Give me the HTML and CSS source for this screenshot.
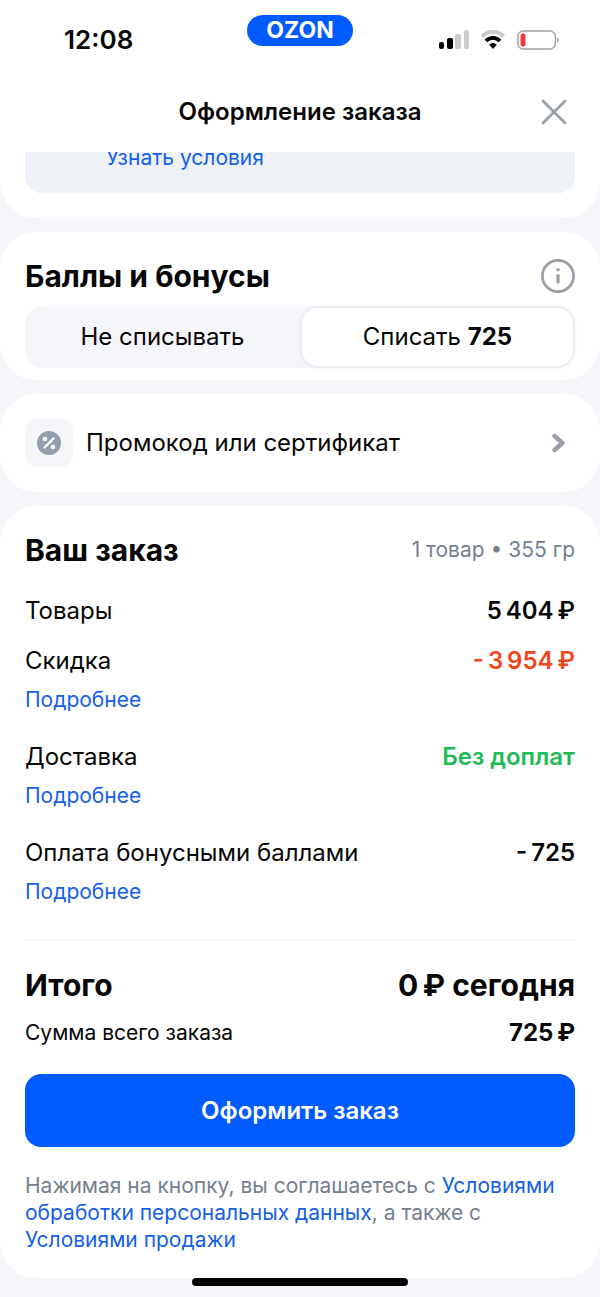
FILE: index.html
```html
<!DOCTYPE html>
<html lang="ru">
<head>
<meta charset="utf-8">
<meta name="viewport" content="width=device-width, initial-scale=1">
<title>Оформление заказа</title>
<link rel="stylesheet" href="styles.css">
</head>
<body>
<header class="top">
  <div class="status">
    <span class="time">12:08</span>
    <span class="brand">OZON</span>
    <div class="indicators">
      <svg width="30" height="20" viewBox="0 0 30 20" aria-hidden="true">
        <rect x="0" y="12" width="5" height="7" rx="2" fill="#000"/>
        <rect x="8" y="8" width="6" height="11" rx="2" fill="#000"/>
        <rect x="16" y="4" width="6" height="15" rx="2" fill="#cbcbcb"/>
        <rect x="25" y="0" width="5" height="19" rx="2" fill="#cbcbcb"/>
      </svg>
      <svg width="26" height="20" viewBox="0 0 26 20" fill="none" aria-hidden="true">
        <path d="M2 6.500C8.500 .3 17.500 .3 24 6.500" stroke="#cbcbcb" stroke-width="4"/>
        <path d="M6 11c4-4.200 10-4.200 14 0" stroke="#000" stroke-width="3.800"/>
        <path d="M9.200 14.700c2.300-2.200 5.300-2.200 7.600 0L13 19z" fill="#000"/>
      </svg>
      <svg width="43" height="20" viewBox="0 0 43 20" aria-hidden="true">
        <rect x=".9" y=".9" width="37.500" height="18.200" rx="5.500" fill="none" stroke="#a3a3a3" stroke-width="1.500"/>
        <rect x="3.500" y="3.500" width="5" height="13" rx="2" fill="#f03a34"/>
        <path d="M40 7.500c2.300.6 2.300 4.400 0 5z" fill="#a3a3a3"/>
      </svg>
    </div>
  </div>
  <div class="titlebar">
    <h1 class="title">Оформление заказа</h1>
    <button class="icon-button" type="button" aria-label="Закрыть">
      <svg width="26" height="26" viewBox="0 0 26 26" aria-hidden="true">
        <path d="M2 2l22 22M24 2L2 24" stroke="#989fa9" stroke-width="2.600" stroke-linecap="round"/>
      </svg>
    </button>
  </div>
</header>
<main class="content">
  <section class="card card-notice">
    <div class="notice"><a class="link notice-link" href="#terms">Узнать условия</a></div>
  </section>

  <section class="card card-points">
    <div class="card-head">
      <h2 class="heading">Баллы и бонусы</h2>
      <button class="icon-button" type="button" aria-label="О баллах">
        <svg width="34" height="34" viewBox="0 0 34 34" aria-hidden="true">
          <circle cx="17" cy="17" r="15.600" fill="none" stroke="#989fa9" stroke-width="2.700"/>
          <circle cx="17" cy="10.700" r="1.700" fill="#989fa9"/>
          <path d="M17 16.500v6.500" stroke="#989fa9" stroke-width="3.200" stroke-linecap="round"/>
        </svg>
      </button>
    </div>
    <div class="segments" role="radiogroup" aria-label="Баллы и бонусы">
      <label class="segment"><input class="segment-input" type="radio" name="points"><span class="segment-text">Не списывать</span></label>
      <label class="segment"><input class="segment-input" type="radio" name="points" checked><span class="segment-text">Списать <b>725</b></span></label>
    </div>
  </section>

  <section class="card">
    <button class="promo" type="button">
      <span class="promo-tile">
        <svg width="24" height="24" viewBox="0 0 24 24" aria-hidden="true">
          <circle cx="12" cy="12" r="12" fill="#949eac"/>
          <path d="M7.500 16.500l9-9" stroke="#fff" stroke-width="2.400" stroke-linecap="round"/>
          <circle cx="8" cy="8" r="2.300" fill="#fff"/>
          <circle cx="16" cy="16" r="2.300" fill="#fff"/>
        </svg>
      </span>
      <span class="promo-text">Промокод или сертификат</span>
      <svg class="promo-arrow" width="14" height="20" viewBox="0 0 14 20" aria-hidden="true">
        <path d="M2.500 3l8 7-8 7" fill="none" stroke="#989fa9" stroke-width="4.400" stroke-linecap="round" stroke-linejoin="round"/>
      </svg>
    </button>
  </section>

  <section class="card card-order">
    <div class="card-head">
      <h2 class="heading">Ваш заказ</h2>
      <span class="meta">1 товар • 355 гр</span>
    </div>
    <div class="entries">
      <div class="rows">
        <div class="row"><span>Товары</span><span class="value">5&#8201;404&#8201;₽</span></div>
        <div class="entry">
          <div class="row"><span>Скидка</span><span class="value value-discount">-&#8201;3&#8201;954&#8201;₽</span></div>
          <a class="link" href="#discount">Подробнее</a>
        </div>
      </div>
      <div class="entry">
        <div class="row"><span>Доставка</span><span class="value value-free">Без доплат</span></div>
        <a class="link" href="#delivery">Подробнее</a>
      </div>
      <div class="entry">
        <div class="row"><span>Оплата бонусными баллами</span><span class="value">-&#8201;725</span></div>
        <a class="link" href="#points">Подробнее</a>
      </div>
    </div>
    <div class="totals">
      <div class="row row-total"><span>Итого</span><span>0&#8201;₽ сегодня</span></div>
      <div class="row"><span class="small">Сумма всего заказа</span><span class="value value-sum">725&#8201;₽</span></div>
    </div>
    <button class="submit" type="button">Оформить заказ</button>
    <p class="legal">Нажимая на кнопку, вы соглашаетесь с <a href="#personal">Условиями обработки персональных данных</a>, а также с <a href="#sale">Условиями продажи</a></p>
  </section>
</main>
<div class="home-bar"></div>
</body>
</html>
```
FILE: styles.css
```css
* {
  box-sizing: border-box;
}

body {
  margin: 0;
  background: #f5f6fa;
  color: #070707;
  font-family: Inter, "Noto Sans", sans-serif;
  font-size: 24px;
  line-height: 32px;
}

h1, h2, p {
  margin: 0;
}

button {
  border: 0;
  padding: 0;
  background: none;
  color: inherit;
  font: inherit;
  cursor: pointer;
}

svg {
  display: block;
}

a {
  color: #1560e8;
  text-decoration: none;
}

.top {
  background: #fff;
}

.status {
  display: grid;
  grid-template-columns: 1fr auto 1fr;
  align-items: center;
  height: 80px;
  padding: 0 40px 0 64px;
}

.time {
  font-size: 26px;
  font-weight: 600;
}

.brand {
  align-self: start;
  margin: 15px 24px 0 0;
  padding: 0 19px;
  border-radius: 16px;
  background: #005bff;
  color: #fff;
  font-size: 23px;
  font-weight: 700;
  line-height: 31px;
}

.indicators {
  display: flex;
  justify-content: flex-end;
  gap: 11px;
}

.titlebar {
  display: grid;
  grid-template-columns: 32px 1fr 32px;
  align-items: center;
  height: 72px;
  padding: 0 30px 8px;
}

.title {
  grid-column: 2;
  font-size: 24px;
  font-weight: 600;
  text-align: center;
}

.titlebar .icon-button {
  justify-self: center;
}

.content {
  display: flex;
  flex-direction: column;
  gap: 14px;
}

.card {
  padding: 25px;
  border-radius: 36px;
  background: #fff;
}

.card-notice {
  padding-top: 0;
  border-radius: 0 0 36px 36px;
}

.notice {
  overflow: hidden;
  padding: 0 81px 21px;
  border-radius: 0 0 16px 16px;
  background: #eef1f5;
}

.link {
  display: block;
  font-size: 21px;
  line-height: 28px;
}

.notice-link {
  margin-top: -8px;
}

.card-points {
  padding-top: 24px;
  padding-bottom: 12px;
}

.card-head {
  display: flex;
  align-items: center;
  justify-content: space-between;
}

.heading {
  font-size: 30px;
  font-weight: 700;
  line-height: 40px;
}

.segments {
  display: grid;
  grid-template-columns: 1fr 1fr;
  gap: 4px;
  margin-top: 10px;
  padding: 2px;
  border-radius: 18px;
  background: #f5f6fa;
}

.segment {
  display: block;
  position: relative;
  cursor: pointer;
}

.segment-input {
  position: absolute;
  inset: 0;
  opacity: 0;
  margin: 0;
}

.segment-text {
  display: block;
  padding: 13px;
  border-radius: 16px;
  line-height: 32px;
  text-align: center;
}

.segment-input:checked + .segment-text {
  background: #fff;
  box-shadow: 0 0 5px rgba(30, 40, 90, 0.12);
}

.promo {
  display: flex;
  align-items: center;
  gap: 13px;
  width: 100%;
  text-align: left;
}

.promo-tile {
  padding: 12px;
  border-radius: 12px;
  background: #f5f6fa;
}

.promo-text {
  flex: 1;
}

.promo-arrow {
  margin-right: 9px;
}

.card-order {
  display: flex;
  flex-direction: column;
  gap: 25px;
  padding-top: 24px;
}

.meta {
  color: #75808c;
  font-size: 21px;
}

.entries {
  display: flex;
  flex-direction: column;
  gap: 27px;
}

.rows {
  display: flex;
  flex-direction: column;
  gap: 18px;
}

.entry {
  display: flex;
  flex-direction: column;
  align-items: flex-start;
  gap: 9px;
}

.row {
  display: flex;
  align-items: center;
  justify-content: space-between;
  width: 100%;
}

.value {
  font-weight: 600;
}

.value-discount {
  color: #f1461d;
}

.value-free {
  color: #1dbb55;
}

.value-sum {
  font-weight: 700;
}

.totals {
  display: flex;
  flex-direction: column;
  gap: 12px;
  margin-top: 8px;
  padding-top: 24px;
  border-top: 2px solid #f5f6f8;
}

.row-total {
  font-size: 30px;
  font-weight: 700;
  line-height: 40px;
}

.small {
  font-size: 21px;
}

.submit {
  padding: 20px;
  border-radius: 16px;
  background: #005bff;
  color: #fff;
  font-weight: 600;
  line-height: 33px;
}

.legal {
  color: #75808c;
  font-size: 21px;
  line-height: 27px;
}

.home-bar {
  width: 36%;
  height: 8px;
  margin: 0 auto 10px;
  border-radius: 4px;
  background: #000;
}
```
